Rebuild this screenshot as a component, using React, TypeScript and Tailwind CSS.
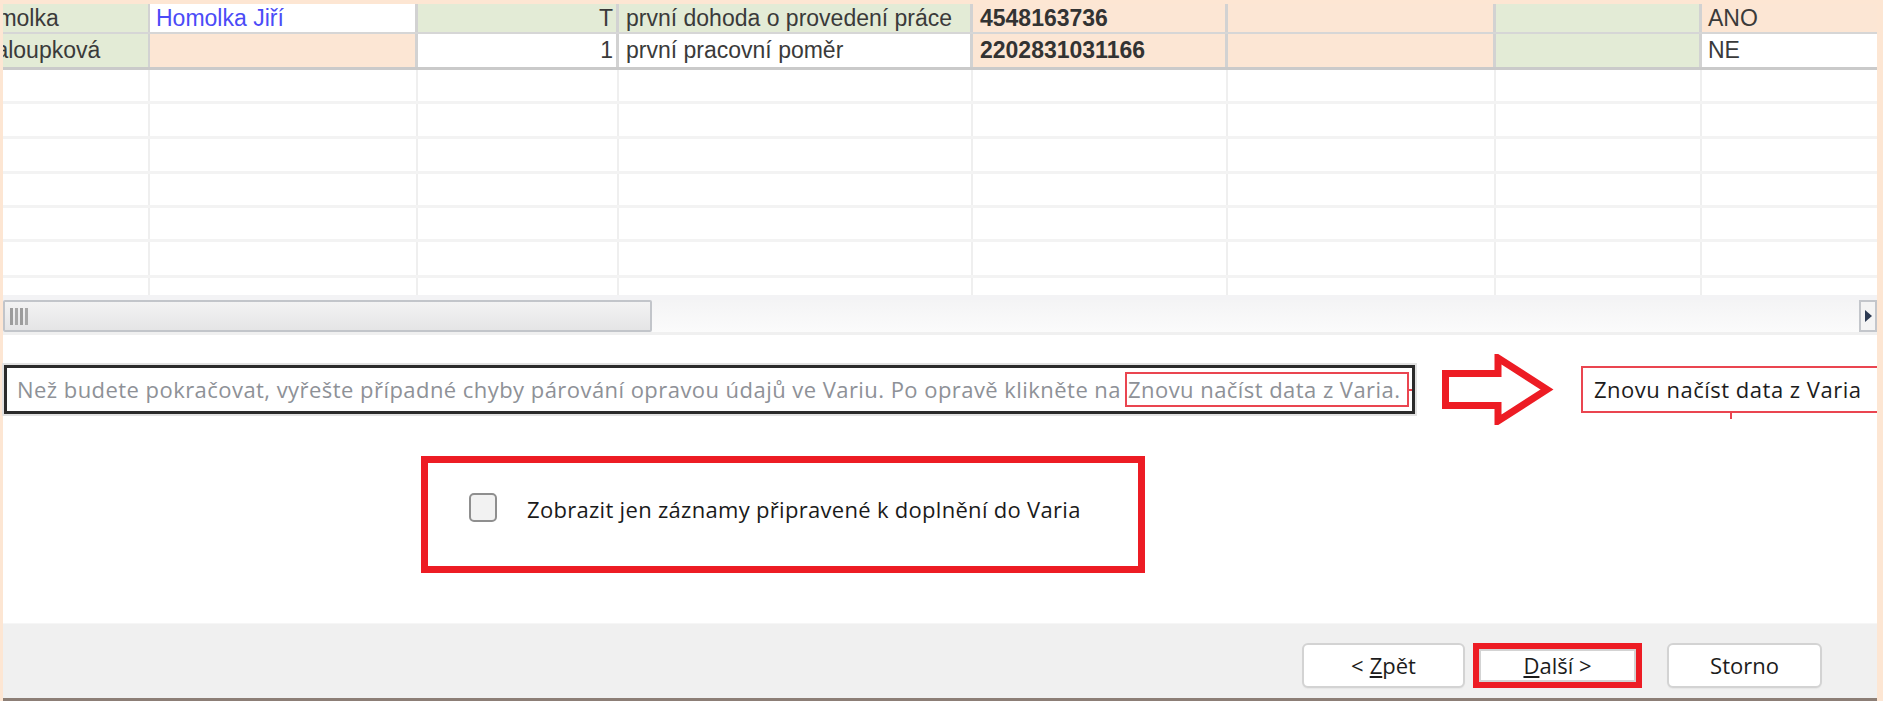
import React from 'react'

// widths of the grid columns, each including its right line; the last one takes the rest
const COLS = ['w-[147px]', 'w-[268px]', 'w-[201px]', 'w-[354px]', 'w-[255px]', 'w-[268px]', 'w-[206px]', 'flex-1']

const GREEN = 'bg-[#e3ebd6]'
const PEACH = 'bg-[#fce6d4]'
const WHITE = 'bg-white'

type Cell = { text?: string; bg: string; cls?: string; inner?: string }

const rows: Cell[][] = [
  [
    { text: 'Homolka', bg: GREEN, inner: 'ml-[-35px]' },
    { text: 'Homolka Jiří', bg: WHITE, cls: 'pl-[6px] text-[#4b4bf7]' },
    { text: 'T', bg: GREEN, cls: 'justify-end pr-[3px]' },
    { text: 'první dohoda o provedení práce', bg: GREEN, cls: 'pl-[7px]' },
    { text: '4548163736', bg: PEACH, cls: 'pl-[7px] font-bold text-[#333333]' },
    { bg: PEACH },
    { bg: GREEN },
    { text: 'ANO', bg: PEACH, cls: 'pl-[6px]' },
  ],
  [
    { text: 'Chaloupková', bg: GREEN, inner: 'ml-[-37px]' },
    { bg: PEACH },
    { text: '1', bg: WHITE, cls: 'justify-end pr-[3px]' },
    { text: 'první pracovní poměr', bg: WHITE, cls: 'pl-[7px]' },
    { text: '2202831031166', bg: PEACH, cls: 'pl-[7px] font-bold text-[#333333]' },
    { bg: PEACH },
    { bg: GREEN },
    { text: 'NE', bg: WHITE, cls: 'pl-[6px]' },
  ],
]

const DataRow = ({ cells, rowCls }: { cells: Cell[]; rowCls: string }) => (
  <div className={`flex ${rowCls}`}>
    {cells.map((c, i) => (
      <div
        key={i}
        className={`${COLS[i]} ${c.bg} ${c.cls ?? ''} flex items-center overflow-hidden whitespace-nowrap ${
          i < 7 ? (i === 0 ? 'border-r-2 border-[#d2d2d2]' : 'border-r-[3px] border-[#d2d2d2]') : ''
        }`}
      >
        {c.text && <span className={c.inner}>{c.text}</span>}
      </div>
    ))}
  </div>
)

const EmptyRow = ({ h }: { h: string }) => (
  <div className={`flex ${h} border-b-[3px] border-[#f3f3f3]`}>
    {COLS.map((w, i) => (
      <div key={i} className={`${w} ${i < 7 ? 'border-r-2 border-[#efefef]' : ''}`} />
    ))}
  </div>
)

const Arrow = () => (
  <svg width="117" height="71" viewBox="0 0 117 71" className="shrink-0">
    <path
      d="M4.5 19.5 H57 V4 L106 35.5 L57 67 V51.5 H4.5 Z"
      fill="white"
      stroke="#ed1c24"
      strokeWidth="7"
      strokeLinejoin="miter"
    />
  </svg>
)

const DialogButton = ({ children, cls }: { children: React.ReactNode; cls?: string }) => (
  <div
    className={`flex h-full items-center justify-center rounded-[6px] border-2 border-[#d3d3d3] bg-white text-[22px] text-[#1c1c1c] shadow-[0_1px_1px_#e6e6e6] ${cls ?? ''}`}
  >
    {children}
  </div>
)

export default function App() {
  return (
    <div className="h-[701px] w-[1883px] overflow-hidden bg-[#fde6d3] pt-[4px] pl-[3px] pr-[6px]">
      <div className="flex h-[697px] flex-col bg-white">
        {/* grid */}
        <div className="font-['Liberation_Sans',Arial,sans-serif] text-[23px] leading-none text-[#3a3a3a]">
          <DataRow cells={rows[0]} rowCls="h-[30px] border-b-2 border-[#d6d6d6]" />
          <DataRow cells={rows[1]} rowCls="h-[36px] border-b-[3px] border-[#cacaca]" />
          <EmptyRow h="h-[34px]" />
          <EmptyRow h="h-[35px]" />
          <EmptyRow h="h-[35px]" />
          <EmptyRow h="h-[34px]" />
          <EmptyRow h="h-[34px]" />
          <EmptyRow h="h-[36px]" />
          <div className="flex h-[17px]">
            {COLS.map((w, i) => (
              <div key={i} className={`${w} ${i < 7 ? 'border-r-2 border-[#efefef]' : ''}`} />
            ))}
          </div>
        </div>

        {/* horizontal scrollbar */}
        <div className="h-[5px] bg-[#f3f3f5]" />
        <div className="flex h-[32px] bg-gradient-to-b from-[#f4f4f5] to-[#fbfbfb]">
          <div className="flex w-[649px] items-center rounded-[2px] border-2 border-[#c2c5ca] bg-gradient-to-b from-[#f3f3f3] to-[#e5e5e6] pl-[5px]">
            <div className="flex h-[17px] gap-[2px]">
              <div className="w-[3px] bg-[#9c9c9c]" />
              <div className="w-[3px] bg-[#a8a8a8]" />
              <div className="w-[3px] bg-[#9c9c9c]" />
              <div className="w-[3px] bg-[#a8a8a8]" />
            </div>
          </div>
          <div className="flex-1" />
          <div className="flex w-[18px] items-center justify-center border-2 border-[#c3c6cb] bg-[#f4f4f4]">
            <svg width="8" height="12" viewBox="0 0 8 12">
              <path d="M1 0 L8 6 L1 12 Z" fill="#2c3a52" />
            </svg>
          </div>
        </div>
        <div className="h-[3px] bg-[#f0f0f0]" />

        {/* info message with reload button */}
        <div className="mt-[19px] flex h-[71px] items-center font-['Open_Sans',sans-serif]">
          <div className="relative ml-[1px] flex h-[49px] w-[1411px] shrink-0 items-center overflow-hidden border-[3px] border-[#2b2b2b] pl-[10px] text-[22px] tracking-[0.45px] whitespace-nowrap text-[#8e9197] shadow-[0_0_0_2px_#e2e2e2]">
            <span>Než budete pokračovat, vyřešte případné chyby párování opravou údajů ve Variu. Po opravě klikněte na</span>
            <span className="ml-[4px] flex h-[35px] shrink-0 items-center border-2 border-[#ea4550] pr-[7px] pl-[1px]">
              Znovu načíst data z Varia.
            </span>
            <div className="h-[2px] w-[6px] shrink-0 bg-[#ea4550]" />
          </div>
          <div className="ml-[26px]">
            <Arrow />
          </div>
          <div className="relative ml-[23px] flex h-[47px] flex-1 items-center overflow-visible border-2 border-r-0 border-[#ea4550] bg-white pl-[11px] text-[22px] tracking-[0.5px] whitespace-nowrap text-[#1c1c1c]">
            Znovu načíst data z Varia
            <div className="absolute top-[45px] left-[147px] h-[6px] w-[2px] bg-[#ea4550]" />
          </div>
        </div>

        {/* filter checkbox */}
        <div className="mt-[31px] ml-[418px] flex h-[117px] w-[724px] items-start border-[7px] border-[#ed1c24] pt-[30px] pl-[41px] font-['Open_Sans',sans-serif]">
          <div className="h-[29px] w-[28px] shrink-0 rounded-[5px] border-2 border-[#8f8f8f] bg-[#f2f2f2]" />
          <span className="ml-[30px] text-[22px] tracking-[0.3px] whitespace-nowrap text-[#1a1a1a]">
            Zobrazit jen záznamy připravené k doplnění do Varia
          </span>
        </div>

        <div className="flex-1" />

        {/* wizard buttons */}
        <div className="flex h-[78px] items-start justify-end border-t border-[#f6f6f6] border-b-[3px] border-b-[#8c7e76] bg-[#f0f0f0] pt-[19px] pr-[55px] font-['Open_Sans',sans-serif]">
          <div className="h-[45px] w-[163px]">
            <DialogButton>
              &lt; <span className="ml-[6px] underline">Z</span>pět
            </DialogButton>
          </div>
          <div className="ml-[8px] h-[45px] w-[169px] border-[6px] border-[#ed1c24] bg-white">
            <DialogButton cls="rounded-none border-0 shadow-none">
              <span className="underline">D</span>alší &gt;
            </DialogButton>
          </div>
          <div className="ml-[25px] h-[45px] w-[155px]">
            <DialogButton>Storno</DialogButton>
          </div>
        </div>
      </div>
    </div>
  )
}
